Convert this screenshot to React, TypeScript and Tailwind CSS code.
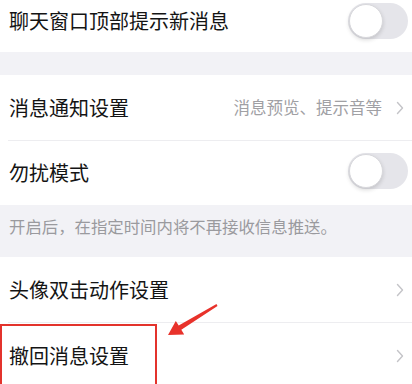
import React from 'react';

const Toggle: React.FC = () => (
  <div className="w-[60px] h-[36px] rounded-full bg-[#e5e5ea] p-[1px] flex items-center">
    <div className="w-[34px] h-[34px] rounded-full bg-white border border-[#d8d8dc] shadow-[0_2px_4px_rgba(0,0,0,0.15)]" />
  </div>
);

const Chevron: React.FC = () => (
  <svg width="8" height="14" viewBox="0 0 8 14" className="shrink-0">
    <path d="M1.5 1.5 L6.5 7 L1.5 12.5" fill="none" stroke="#c4c4c8" strokeWidth="1.4" strokeLinecap="round" strokeLinejoin="round" />
  </svg>
);

const Divider: React.FC = () => (
  <div className="pl-[8px] bg-white">
    <div className="h-px bg-[#ededf0]" />
  </div>
);

export default function App() {
  return (
    <div
      className="relative w-[412px] h-[384px] overflow-hidden bg-white text-[#141414]"
      style={{ fontFamily: '"Noto Sans CJK SC", "Noto Sans", sans-serif' }}
    >
      <div className="h-[52px] flex items-start justify-between pl-[9px] pr-[4px] pt-[3px]">
        <span className="text-[20px] leading-[36px]">聊天窗口顶部提示新消息</span>
        <Toggle />
      </div>

      <div className="h-[23px] bg-[#f2f2f6]" />

      <div className="h-[65px] flex items-center justify-between pl-[9px] pr-[8px]">
        <span className="text-[20px]">消息通知设置</span>
        <div className="flex items-center gap-[14px]">
          <span className="text-[16.5px] text-[#a0a0a4]">消息预览、提示音等</span>
          <Chevron />
        </div>
      </div>

      <Divider />

      <div className="h-[64px] flex items-center justify-between pl-[9px] pr-[4px]">
        <span className="text-[20px]">勿扰模式</span>
        <div className="-mt-[4px]">
          <Toggle />
        </div>
      </div>

      <div className="h-[52px] bg-[#f2f2f6] pl-[9px] pt-[9px]">
        <span className="text-[16.4px] text-[#9a9a9e]">开启后，在指定时间内将不再接收信息推送。</span>
      </div>

      <div className="h-[65px] flex items-center justify-between pl-[9px] pr-[8px]">
        <span className="text-[20px]">头像双击动作设置</span>
        <Chevron />
      </div>

      <Divider />

      <div className="h-[66px] flex items-center justify-between pl-[9px] pr-[8px]">
        <span className="text-[20px]">撤回消息设置</span>
        <Chevron />
      </div>

      {/* annotation overlay */}
      <div className="absolute left-0 top-[324px] w-[157px] h-[80px] border-2 border-[#e3332c]" />
      <svg className="absolute inset-0 pointer-events-none" width="412" height="384" viewBox="0 0 412 384">
        <polygon
          points="216.5,304.1 178.7,325.6 175.8,320.9 168,335 184.2,334.5 181.3,329.8 217.5,305.9"
          fill="#e8322b"
        />
      </svg>
    </div>
  );
}
